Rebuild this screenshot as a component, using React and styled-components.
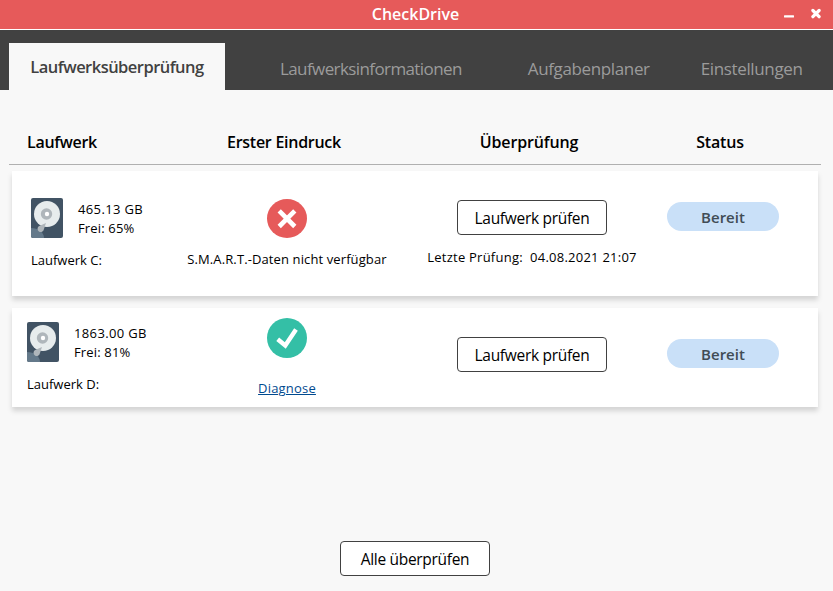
import React, { Component } from 'react';
import styled, { createGlobalStyle } from 'styled-components';

const GlobalStyle = createGlobalStyle`
    * {
        box-sizing: border-box;
    }

    body {
        margin: 0;
        background: #f8f8f8;
        font-family: 'Open Sans', 'Noto Sans', sans-serif;
        color: #000;
    }
`;

const Window = styled.div`
    display: flex;
    flex-direction: column;
    width: 833px;
    height: 591px;
    overflow: hidden;
    background: #f8f8f8;
`;

const TitleBar = styled.header`
    display: grid;
    grid-template-columns: 60px 1fr 60px;
    height: 30px;
    background: #e65a5a;
    border-bottom: 1px solid #fff;
`;

const Title = styled.h1`
    grid-column: 2;
    margin: 0;
    padding-right: 2px;
    text-align: center;
    font-size: 16px;
    font-weight: 600;
    line-height: 28px;
    letter-spacing: 0;
    color: #fff;
`;

const WindowButtons = styled.div`
    display: flex;
    gap: 17px;
    padding: 8px 0 0 11px;
`;

const TabBar = styled.nav`
    display: flex;
    height: 60px;
    padding: 13px 30px 0 9px;
    background: #414141;
`;

const ActiveTab = styled.div`
    width: 216px;
    height: 47px;
    margin-right: 55px;
    background: #f8f8f8;
    text-align: center;
    font-size: 16.5px;
    font-weight: 600;
    line-height: 48px;
    letter-spacing: -0.53px;
    color: #414141;
    white-space: nowrap;
`;

const Tab = styled.div`
    margin-right: ${props => props.$gap || 0}px;
    font-size: 17px;
    line-height: 51px;
    letter-spacing: ${props => props.$spacing}px;
    color: #9b9b9b;
    white-space: nowrap;
`;

const Main = styled.main`
    display: flex;
    flex-direction: column;
    flex: 1;
    padding: 30px 12px 0 9px;
`;

const columns = '160px 230px 260px 122px';

const TableHead = styled.div`
    display: grid;
    grid-template-columns: ${columns};
    height: 45px;
    border-bottom: 1px solid #b0b0b0;
`;

const HeadCell = styled.div`
    padding-left: ${props => (props.$first ? 18 : 0)}px;
    text-align: ${props => (props.$first ? 'left' : 'center')};
    font-size: 16px;
    font-weight: 600;
    line-height: 45px;
    letter-spacing: ${props => props.$spacing}px;
    white-space: nowrap;
`;

const Card = styled.section`
    display: grid;
    grid-template-columns: ${columns};
    height: ${props => props.$height}px;
    margin: ${props => props.$top}px 3px 0;
    background: #fff;
    box-shadow: 0 4px 5px rgba(0, 0, 0, 0.15);
`;

const Cell = styled.div`
    display: flex;
    flex-direction: column;
    align-items: center;
    padding-top: ${props => props.$top}px;
`;

const DriveCell = styled.div`
    padding: ${props => props.$top}px 0 0 ${props => props.$left}px;
`;

const DriveTop = styled.div`
    display: flex;
    gap: 15px;
    height: 53px;
`;

const DriveInfo = styled.div`
    padding-top: 2px;
`;

const Text = styled.div`
    font-size: 13px;
    line-height: 19px;
    letter-spacing: ${props => props.$spacing || 0}px;
    white-space: pre;
`;

const SmartText = styled(Text)`
    margin-top: 11px;
`;

const Checked = styled(Text)`
    margin-top: 13px;
`;

const Diagnose = styled.a`
    margin-top: 21px;
    font-size: 13px;
    line-height: 19px;
    letter-spacing: 0.2px;
    color: #004a8f;
    text-decoration: underline;
    text-underline-offset: 1px;
`;

const Button = styled.button`
    width: 150px;
    height: 35px;
    padding: 2px 0 0;
    border: 1px solid #414141;
    border-radius: 4px;
    background: #fff;
    font-family: inherit;
    font-size: 15.5px;
    line-height: 31px;
    letter-spacing: -0.3px;
    color: #000;
`;

const Footer = styled.footer`
    display: flex;
    justify-content: center;
    margin-top: auto;
    padding-bottom: 15px;
`;

const StatusPill = styled.div`
    width: 112px;
    height: 29px;
    border-radius: 15px;
    background: #c9e0f8;
    text-align: center;
    font-size: 15px;
    font-weight: 600;
    line-height: 30px;
    color: #414c55;
`;

const MinimizeIcon = () => (
    <svg width="10" height="12" viewBox="0 0 10 12">
        <path d="M0.8 8.3H9.2" stroke="#fff" strokeWidth="2.2" strokeLinecap="round" />
    </svg>
);

const CloseIcon = () => (
    <svg width="10" height="12" viewBox="0 0 10 12">
        <path d="M1.9 2.5L8.1 8.7M8.1 2.5L1.9 8.7" stroke="#fff" strokeWidth="3.2" strokeLinecap="round" />
    </svg>
);

const DiskIcon = () => (
    <svg width="32" height="40" viewBox="0 0 32 40">
        <rect width="32" height="40" rx="2" fill="#415364" />
        <path d="M0 30C7 30 13 34 13 40H2A2 2 0 0 1 0 38Z" fill="#64798a" />
        <circle cx="16" cy="16" r="13" fill="#e7eced" />
        <circle cx="15.5" cy="16" r="5.7" fill="#afb6bb" />
        <circle cx="16" cy="16" r="2.2" fill="#fff" />
        <path d="M15 25L12.9 31.2A3.2 3.2 0 1 1 8.2 28Z" fill="#afb6bb" />
    </svg>
);

const BadIcon = () => (
    <svg width="40" height="40" viewBox="0 0 40 40">
        <ellipse cx="20" cy="19.5" rx="20" ry="19.5" fill="#e65a5a" />
        <path d="M12.2 11.9L27.8 27.5M27.8 11.9L12.2 27.5" stroke="#fff" strokeWidth="4.6" />
    </svg>
);

const GoodIcon = () => (
    <svg width="40" height="40" viewBox="0 0 40 40">
        <circle cx="20" cy="20" r="20" fill="#34bfa6" />
        <path d="M10.7 21.2L18.3 27.4L29 11.6" fill="none" stroke="#fff" strokeWidth="4.4" />
    </svg>
);

const drives = [
    {
        name: 'Laufwerk C:', size: '465.13 GB', free: 'Frei: 65%', smart: false,
        checked: '04.08.2021 21:07', height: 125, top: 6, left: 19, driveTop: 27, smartTop: 28
    },
    {
        name: 'Laufwerk D:', size: '1863.00 GB', free: 'Frei: 81%', smart: true,
        checked: '', height: 99, top: 12, left: 15, driveTop: 14, smartTop: 10
    }
];

class DriveCard extends Component {
    render() {
        const drive = this.props.drive;

        return (
            <Card $height={drive.height} $top={drive.top}>
                <DriveCell $top={drive.driveTop} $left={drive.left}>
                    <DriveTop>
                        <DiskIcon />
                        <DriveInfo>
                            <Text $spacing={0.36}>{drive.size}</Text>
                            <Text $spacing={0.15}>{drive.free}</Text>
                        </DriveInfo>
                    </DriveTop>
                    <Text>{drive.name}</Text>
                </DriveCell>
                <Cell $top={drive.smartTop}>
                    {drive.smart ? <GoodIcon /> : <BadIcon />}
                    {
                        drive.smart ?
                            <Diagnose>Diagnose</Diagnose> :
                            <SmartText $spacing={0.11}>S.M.A.R.T.-Daten nicht verfügbar</SmartText>
                    }
                </Cell>
                <Cell $top={29}>
                    <Button>Laufwerk prüfen</Button>
                    {drive.checked ? <Checked $spacing={0.24}>{'Letzte Prüfung:  ' + drive.checked}</Checked> : ''}
                </Cell>
                <Cell $top={31}>
                    <StatusPill>Bereit</StatusPill>
                </Cell>
            </Card>
        )
    }
}

class App extends Component {
    render() {
        return (
            <Window>
                <GlobalStyle />
                <TitleBar>
                    <Title>CheckDrive</Title>
                    <WindowButtons>
                        <MinimizeIcon />
                        <CloseIcon />
                    </WindowButtons>
                </TitleBar>
                <TabBar>
                    <ActiveTab>Laufwerksüberprüfung</ActiveTab>
                    <Tab $gap={66} $spacing={-0.6}>Laufwerksinformationen</Tab>
                    <Tab $gap={51} $spacing={-0.36}>Aufgabenplaner</Tab>
                    <Tab $spacing={-0.36}>Einstellungen</Tab>
                </TabBar>
                <Main>
                    <TableHead>
                        <HeadCell $first $spacing={-0.3}>Laufwerk</HeadCell>
                        <HeadCell $spacing={-0.27}>Erster Eindruck</HeadCell>
                        <HeadCell $spacing={-0.15}>Überprüfung</HeadCell>
                        <HeadCell $spacing={-0.2}>Status</HeadCell>
                    </TableHead>
                    {drives.map(drive => <DriveCard key={drive.name} drive={drive} />)}
                    <Footer>
                        <Button>Alle überprüfen</Button>
                    </Footer>
                </Main>
            </Window>
        )
    }
}

export default App;
